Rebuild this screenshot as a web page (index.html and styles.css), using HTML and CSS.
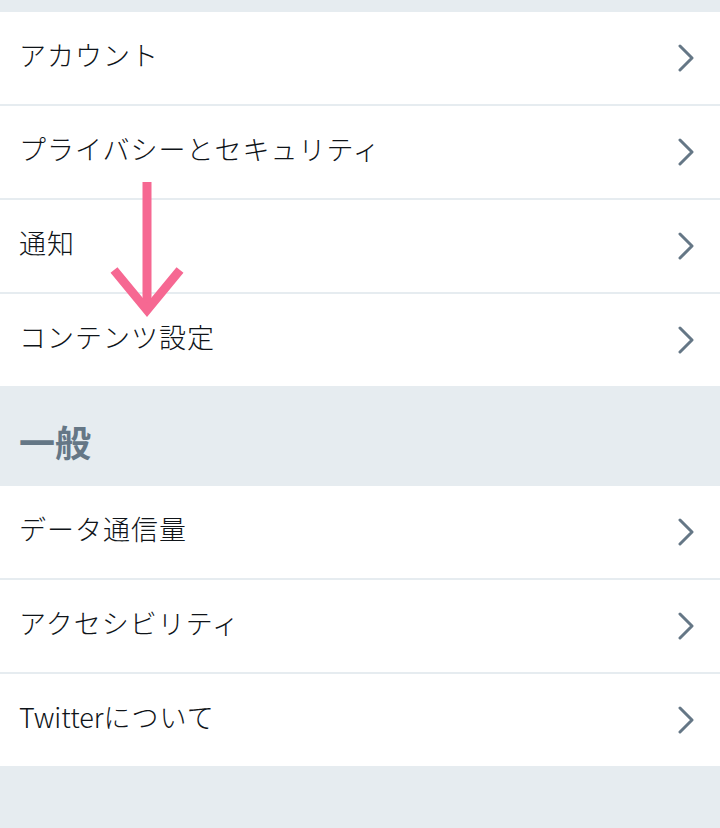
FILE: index.html
```html
<!DOCTYPE html>
<html lang="ja">
<head>
<meta charset="utf-8">
<link rel="stylesheet" href="styles.css">
</head>
<body>
<div class="page">
  <div class="group first">
    <div class="row"><span class="label">アカウント</span><svg class="chev" viewBox="0 0 16 28"><path d="M2 2 L14 14 L2 26"/></svg></div>
    <div class="row"><span class="label">プライバシーとセキュリティ</span><svg class="chev" viewBox="0 0 16 28"><path d="M2 2 L14 14 L2 26"/></svg></div>
    <div class="row"><span class="label">通知</span><svg class="chev" viewBox="0 0 16 28"><path d="M2 2 L14 14 L2 26"/></svg></div>
    <div class="row"><span class="label">コンテンツ設定</span><svg class="chev" viewBox="0 0 16 28"><path d="M2 2 L14 14 L2 26"/></svg></div>
  </div>
  <div class="section"><h2 class="section-title">一般</h2></div>
  <div class="group">
    <div class="row"><span class="label">データ通信量</span><svg class="chev" viewBox="0 0 16 28"><path d="M2 2 L14 14 L2 26"/></svg></div>
    <div class="row"><span class="label">アクセシビリティ</span><svg class="chev" viewBox="0 0 16 28"><path d="M2 2 L14 14 L2 26"/></svg></div>
    <div class="row"><span class="label"><span class="latin">Twitter</span>について</span><svg class="chev" viewBox="0 0 16 28"><path d="M2 2 L14 14 L2 26"/></svg></div>
  </div>
  <svg class="arrow" viewBox="0 0 80 140" width="80" height="140"><path d="M39 0 V128" /><path d="M6 88 L39 128 L72 88" /></svg>
</div>
</body>
</html>
```
FILE: styles.css
```css
* { box-sizing: border-box; }
html, body { margin: 0; padding: 0; }
body {
  background: #e6ecf0;
  font-family: "Noto Sans CJK JP", "Noto Sans", sans-serif;
  width: 720px;
  height: 828px;
  overflow: hidden;
}
.page {
  position: relative;
  padding-top: 12px;
}
.group {
  background: #fff;
  display: flex;
  flex-direction: column;
}
.row {
  height: 94px;
  display: flex;
  align-items: center;
  justify-content: space-between;
  padding: 0 26px 0 19px;
  border-bottom: 2px solid #e6ecf0;
  background: #fff;
}
.row:last-child { border-bottom: none; height: 92px; }
.label {
  font-size: 27px;
  font-weight: 300;
  color: #0f1419;
  line-height: 1;
  margin-top: -8px;
  letter-spacing: 1px;
}
.latin { letter-spacing: 0; }
.chev {
  width: 16px;
  height: 28px;
  fill: none;
  stroke: #657786;
  stroke-width: 3;
  stroke-linecap: round;
  stroke-linejoin: round;
}
.section {
  height: 100px;
  display: flex;
  align-items: center;
  padding-left: 19px;
}
.section-title {
  margin: 0;
  font-size: 36px;
  font-weight: 700;
  color: #657786;
  line-height: 1;
  margin-top: 10px;
}
.arrow {
  position: absolute;
  left: 108px;
  top: 182px;
  fill: none;
  stroke: #f66892;
  stroke-width: 9;
}
```
